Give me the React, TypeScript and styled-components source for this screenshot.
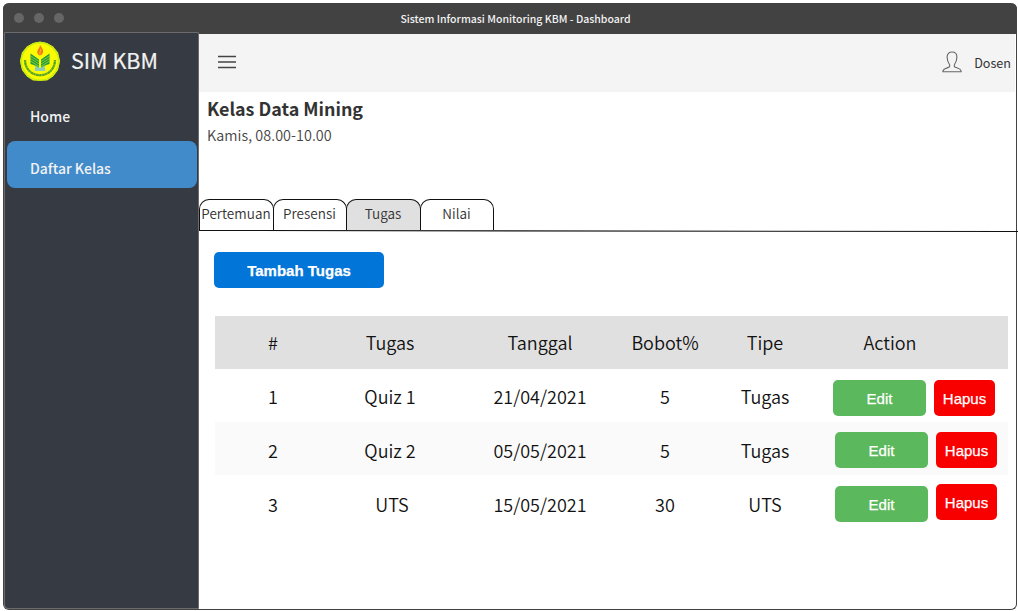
import React from 'react';
import styled, { createGlobalStyle } from 'styled-components';

const Global = createGlobalStyle`
  * { box-sizing: border-box; }
  body { margin: 0; background: #fff; overflow: hidden; font-family: "Noto Sans CJK SC", "Noto Sans", sans-serif; }
`;

const Window = styled.div`
  margin: 3px 0 0 3px;
  width: 1014px;
  height: 607px;
  border: 1px solid #424242;
  border-top: 0;
  border-radius: 6px;
  background: #fff;
  display: flex;
  flex-direction: column;
`;

const TitleBar = styled.header`
  height: 31px;
  margin: 0 -1px;
  flex: none;
  background: #424242;
  border-radius: 6px 6px 0 0;
  display: grid;
  grid-template-columns: 80px 1fr 69px;
  align-items: center;
`;

const Dots = styled.div`
  display: flex;
  gap: 10px;
  padding: 0 0 1px 11.4px;
`;

const Dot = styled.span`
  width: 10px;
  height: 10px;
  border-radius: 50%;
  background: #666;
`;

const Title = styled.div`
  color: #f2f2f2;
  font-size: 10.5px;
  font-weight: 500;
  line-height: 16px;
  text-align: center;
  white-space: nowrap;
`;

const Body = styled.div`
  flex: 1;
  display: flex;
  min-height: 0;
`;

const Sidebar = styled.aside`
  width: 195px;
  margin-top: -2px;
  flex: none;
  background: #363a42;
  border: 1px solid #6b6b6b;
  border-radius: 0 0 0 4px;
`;

const Brand = styled.div`
  display: flex;
  align-items: center;
  height: 56px;
  padding-left: 15px;
  gap: 11px;
  color: #f2f2f2;
  font-size: 21.5px;
  line-height: 32px;
  white-space: nowrap;
`;

const BrandName = styled.span`
  padding-bottom: 2px;
  -webkit-text-stroke: 0.2px #f2f2f2;
`;

const Menu = styled.nav`
  padding: 5px 1px 0 2px;
  display: flex;
  flex-direction: column;
`;

const MenuItem = styled.a<{ $active?: boolean }>`
  height: 47px;
  padding: ${p => (p.$active ? '6px 0 0 23px' : '0 0 4px 23px')};
  display: flex;
  align-items: center;
  border-radius: 8px;
  color: #f2f2f2;
  background: ${p => (p.$active ? '#428bca' : 'transparent')};
  font-size: 14px;
  font-weight: 500;
`;

const Main = styled.main`
  flex: 1;
  min-width: 0;
  display: flex;
  flex-direction: column;
`;

const TopBar = styled.div`
  height: 58px;
  margin-right: 1px;
  background: #f4f4f4;
  display: flex;
  justify-content: space-between;
  align-items: center;
  padding: 0 4px 2px 19px;
`;

const User = styled.div`
  display: flex;
  align-items: center;
  gap: 12px;
  color: #333;
  font-size: 12.6px;
`;

const Heading = styled.section`
  height: 107px;
  padding: 3px 0 0 8px;
`;

const ClassName = styled.h1`
  margin: 0;
  font-size: 17.9px;
  line-height: 26px;
  font-weight: 700;
  color: #333;
`;

const Schedule = styled.p`
  margin: 2px 0 0;
  font-size: 14.4px;
  line-height: 24px;
  font-weight: 350;
  letter-spacing: 0.04px;
  color: #444;
`;

const Tabs = styled.div`
  display: flex;
  height: 31px;
`;

const Tab = styled.button<{ $active?: boolean; $w: number }>`
  width: ${p => p.$w}px;
  margin-right: -1px;
  padding: 0 1px 0 0;
  border: 1px solid #111;
  border-bottom: 0;
  border-radius: 10px 10px 0 0;
  background: ${p => (p.$active ? '#e0e0e0' : '#fff')};
  color: #333;
  font: 350 13.5px/26px "Noto Sans CJK SC", sans-serif;
  letter-spacing: 0.04px;
  white-space: nowrap;
  display: flex;
  justify-content: center;
`;

const TabRule = styled.svg`
  display: block;
  width: 819px;
  height: 2px;
  overflow: visible;
`;

const Content = styled.section`
  padding: 20px 8px 0 16px;
`;

const Button = styled.button<{ $bg: string; $w: number; $bold?: boolean; $drop?: number }>`
  width: ${p => p.$w}px;
  height: 36px;
  margin-top: ${p => p.$drop ?? 0}px;
  padding: 0;
  border: 0;
  border-radius: 5px;
  background: ${p => p.$bg};
  color: #fff;
  font-family: "Liberation Sans", Arial, sans-serif;
  font-size: 15px;
  font-weight: ${p => (p.$bold ? 700 : 400)};
  -webkit-text-stroke: 0.25px #fff;
`;

const Toolbar = styled.div`
  display: flex;
  margin: 0 0 28px -1px;
`;

const Table = styled.div`
  width: 793px;
`;

const Row = styled.div<{ $bg: string; $top: number }>`
  height: 53px;
  display: grid;
  grid-template-columns: 116px 118px 182px 68px 132px 177px;
  background: ${p => p.$bg};
  > span { padding-top: ${p => p.$top}px; }
`;

const Cell = styled.span<{ $shift?: number }>`
  text-align: center;
  padding-left: ${p => p.$shift ?? 0}px;
  font-size: 18px;
  line-height: 24px;
  font-weight: 350;
  color: #111;
  white-space: nowrap;
`;

const ActionTitle = styled(Cell)`
  padding-right: 59px;
`;

const Actions = styled.div<{ $left: number }>`
  display: flex;
  align-items: flex-start;
  gap: 8px;
  padding-left: ${p => p.$left}px;
`;

const Logo = () => (
  <svg width="40" height="40" viewBox="0 0 40 40">
    <path d="M20 .5 27 2 33 5.500 38 11.500 40 20 38 29 33 35.500 27 39.500H13L7 35.500 2 29 0 20 2 11.500 7 5.500 13 2Z" fill="#fafa05" />
    <circle cx="20" cy="20.500" r="18.700" fill="none" stroke="#c4ee12" strokeWidth="1.600" />
    <path d="M5 19c0 8.500 6.200 15.200 15 15.200S35 27.500 35 19" fill="none" stroke="#8cc41c" strokeWidth="2.400" />
    <path d="M5 19c0 8.500 6.200 15.200 15 15.200S35 27.500 35 19" fill="none" stroke="#4f9f2c" strokeWidth="1.800" strokeDasharray="1.500 1.100 2.300 .9" />
    <path d="M10.500 12.500 19 18.500v9.500C17 25.500 14 23.500 10.500 23ZM29.500 12.500 21 18.500v9.500c2-2.500 5-4.500 8.500-5Z" fill="#249b42" />
    <path d="m10.500 15 8.500 5.500m-8.500-3 8.500 5.500m-8.500-3 8.500 5.500m10.500-10.500-8.500 5.500m8.500-3-8.500 5.500m8.500-3-8.500 5.500" stroke="#b5e01f" strokeWidth=".7" />
    <path d="M15.500 24.500 20 27l4.500-2.500.8 5.500H14.700Z" fill="#8ccbb5" />
    <path d="M20 4c2 3 3.600 4.500 3 7.200-.4 1.800-1.500 2.800-3 3.300-1.700-.6-3-2-2.700-4C17.600 8 20 7 20 4Z" fill="#f4761b" />
    <path d="M20.500 8c1 2-1.500 3-.5 5.500" fill="none" stroke="#ffd21a" strokeWidth=".8" />
  </svg>
);

const Hamburger = () => (
  <svg width="20" height="14" viewBox="0 0 20 14">
    <path d="M0 1.500h18M0 7h18M0 12.500h18" stroke="#444" strokeWidth="1.300" />
  </svg>
);

const Person = () => (
  <svg width="20" height="22" viewBox="0 0 20 22" fill="none" stroke="#666" strokeWidth="1.100" strokeLinejoin="round">
    <path d="M7.600 13.800C6 11.500 5.100 9 5.100 6 5.100 2.800 7 1 10 1s4.900 1.800 4.900 5c0 3-.9 5.500-2.500 7.800-.5 1.500.2 2.300 1.800 2.800 3 .9 5 1.600 5 4.100H.8c0-2.500 2-3.200 5-4.100 1.600-.5 2.300-1.300 1.800-2.800Z" />
  </svg>
);

const rows = [
  { no: '1', name: 'Quiz 1', date: '21/04/2021', weight: '5', type: 'Tugas', top: 15, left: 2, edit: 11, del: 11, shift: 0 },
  { no: '2', name: 'Quiz 2', date: '05/05/2021', weight: '5', type: 'Tugas', top: 16, left: 4, edit: 10, del: 10, shift: 0 },
  { no: '3', name: 'UTS', date: '15/05/2021', weight: '30', type: 'UTS', top: 17, left: 4, edit: 11, del: 9, shift: 4 },
];

export default function App() {
  return (
    <>
      <Global />
      <Window>
        <TitleBar>
          <Dots><Dot /><Dot /><Dot /></Dots>
          <Title>Sistem Informasi Monitoring KBM - Dashboard</Title>
        </TitleBar>
        <Body>
          <Sidebar>
            <Brand><Logo /><BrandName>SIM KBM</BrandName></Brand>
            <Menu>
              <MenuItem>Home</MenuItem>
              <MenuItem $active>Daftar Kelas</MenuItem>
            </Menu>
          </Sidebar>
          <Main>
            <TopBar>
              <Hamburger />
              <User><Person />Dosen</User>
            </TopBar>
            <Heading>
              <ClassName>Kelas Data Mining</ClassName>
              <Schedule>Kamis, 08.00-10.00</Schedule>
            </Heading>
            <Tabs>
              <Tab $w={75}>Pertemuan</Tab>
              <Tab $w={74}>Presensi</Tab>
              <Tab $w={75} $active>Tugas</Tab>
              <Tab $w={74}>Nilai</Tab>
            </Tabs>
            <TabRule viewBox="0 0 819 2"><path d="M0 .5 819 1.500" stroke="#111" strokeWidth="1.100" /></TabRule>
            <Content>
              <Toolbar><Button $bg="#0275d8" $w={170} $bold>Tambah Tugas</Button></Toolbar>
              <Table>
                <Row $bg="#e0e0e0" $top={14}>
                  <Cell>#</Cell><Cell>Tugas</Cell><Cell>Tanggal</Cell><Cell>Bobot%</Cell><Cell>Tipe</Cell>
                  <ActionTitle>Action</ActionTitle>
                </Row>
                {rows.map((r, i) => (
                  <Row key={r.no} $bg={i === 1 ? '#fafafa' : '#fff'} $top={r.top}>
                    <Cell>{r.no}</Cell>
                    <Cell $shift={r.shift}>{r.name}</Cell>
                    <Cell>{r.date}</Cell>
                    <Cell>{r.weight}</Cell>
                    <Cell>{r.type}</Cell>
                    <Actions $left={r.left}>
                      <Button $bg="#5cb85c" $w={93} $drop={r.edit}>Edit</Button>
                      <Button $bg="#f90000" $w={61} $drop={r.del}>Hapus</Button>
                    </Actions>
                  </Row>
                ))}
              </Table>
            </Content>
          </Main>
        </Body>
      </Window>
    </>
  );
}
